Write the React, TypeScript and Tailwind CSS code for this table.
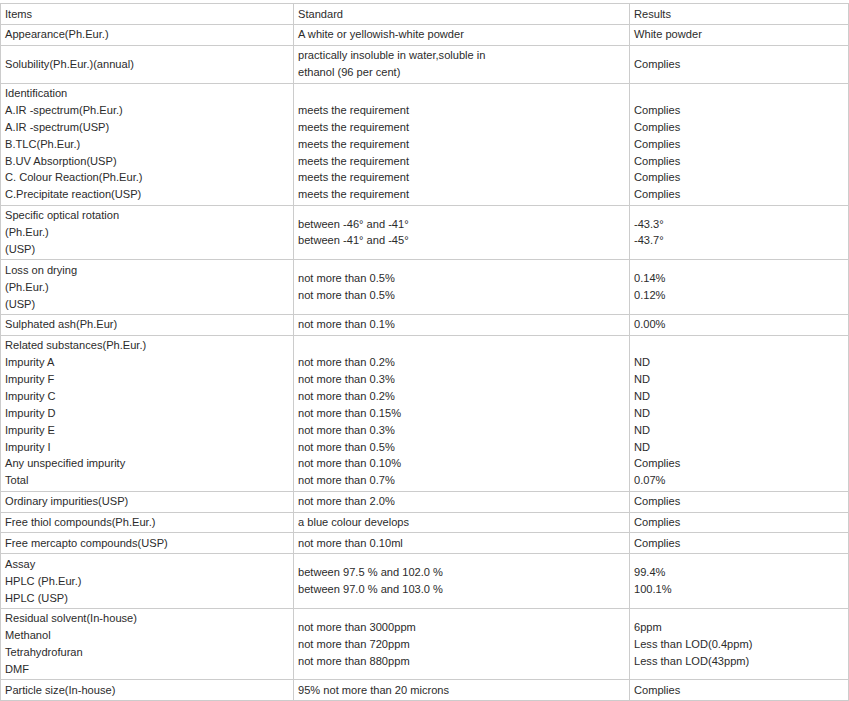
type Row = { items: string[]; standard: string[]; results: string[] };

const rows: Row[] = [
  { items: ["Appearance(Ph.Eur.)"], standard: ["A white or yellowish-white powder"], results: ["White powder"] },
  {
    items: ["Solubility(Ph.Eur.)(annual)"],
    standard: ["practically insoluble in water,soluble in", "ethanol (96 per cent)"],
    results: ["Complies"],
  },
  {
    items: [
      "Identification",
      "A.IR -spectrum(Ph.Eur.)",
      "A.IR -spectrum(USP)",
      "B.TLC(Ph.Eur.)",
      "B.UV Absorption(USP)",
      "C. Colour Reaction(Ph.Eur.)",
      "C.Precipitate reaction(USP)",
    ],
    standard: [
      "",
      "meets the requirement",
      "meets the requirement",
      "meets the requirement",
      "meets the requirement",
      "meets the requirement",
      "meets the requirement",
    ],
    results: ["", "Complies", "Complies", "Complies", "Complies", "Complies", "Complies"],
  },
  {
    items: ["Specific optical rotation", "(Ph.Eur.)", "(USP)"],
    standard: ["between -46° and -41°", "between -41° and -45°"],
    results: ["-43.3°", "-43.7°"],
  },
  {
    items: ["Loss on drying", "(Ph.Eur.)", "(USP)"],
    standard: ["not more than 0.5%", "not more than 0.5%"],
    results: ["0.14%", "0.12%"],
  },
  { items: ["Sulphated ash(Ph.Eur)"], standard: ["not more than 0.1%"], results: ["0.00%"] },
  {
    items: [
      "Related substances(Ph.Eur.)",
      "Impurity A",
      "Impurity F",
      "Impurity C",
      "Impurity D",
      "Impurity E",
      "Impurity I",
      "Any unspecified impurity",
      "Total",
    ],
    standard: [
      "",
      "not more than 0.2%",
      "not more than 0.3%",
      "not more than 0.2%",
      "not more than 0.15%",
      "not more than 0.3%",
      "not more than 0.5%",
      "not more than 0.10%",
      "not more than 0.7%",
    ],
    results: ["", "ND", "ND", "ND", "ND", "ND", "ND", "Complies", "0.07%"],
  },
  { items: ["Ordinary impurities(USP)"], standard: ["not more than 2.0%"], results: ["Complies"] },
  { items: ["Free thiol compounds(Ph.Eur.)"], standard: ["a blue colour develops"], results: ["Complies"] },
  { items: ["Free mercapto compounds(USP)"], standard: ["not more than 0.10ml"], results: ["Complies"] },
  {
    items: ["Assay", "HPLC (Ph.Eur.)", "HPLC (USP)"],
    standard: ["between 97.5 % and 102.0 %", "between 97.0 % and 103.0 %"],
    results: ["99.4%", "100.1%"],
  },
  {
    items: ["Residual solvent(In-house)", "Methanol", "Tetrahydrofuran", "DMF"],
    standard: ["not more than 3000ppm", "not more than 720ppm", "not more than 880ppm"],
    results: ["6ppm", "Less than LOD(0.4ppm)", "Less than LOD(43ppm)"],
  },
  { items: ["Particle size(In-house)"], standard: ["95% not more than 20 microns"], results: ["Complies"] },
];

function Cell({ lines }: { lines: string[] }) {
  return (
    <td className="border border-[#cccccc] pl-[4px] pr-1 py-[1.5px] align-middle">
      {lines.map((l, i) => (
        <div key={i}>{l || "\u00a0"}</div>
      ))}
    </td>
  );
}

export default function App() {
  return (
    <div className="bg-white min-h-[701px] pt-[3px]" style={{ fontFamily: '"Liberation Sans", Arial, sans-serif' }}>
      <table className="w-[848px] table-fixed border-collapse text-[11.1px] leading-[16.875px] text-[#2b2b2b]">
        <colgroup>
          <col className="w-[293px]" />
          <col className="w-[336px]" />
          <col className="w-[219px]" />
        </colgroup>
        <tbody>
          <tr>
            <Cell lines={["Items"]} />
            <Cell lines={["Standard"]} />
            <Cell lines={["Results"]} />
          </tr>
          {rows.map((r, i) => (
            <tr key={i}>
              <Cell lines={r.items} />
              <Cell lines={r.standard} />
              <Cell lines={r.results} />
            </tr>
          ))}
        </tbody>
      </table>
    </div>
  );
}
